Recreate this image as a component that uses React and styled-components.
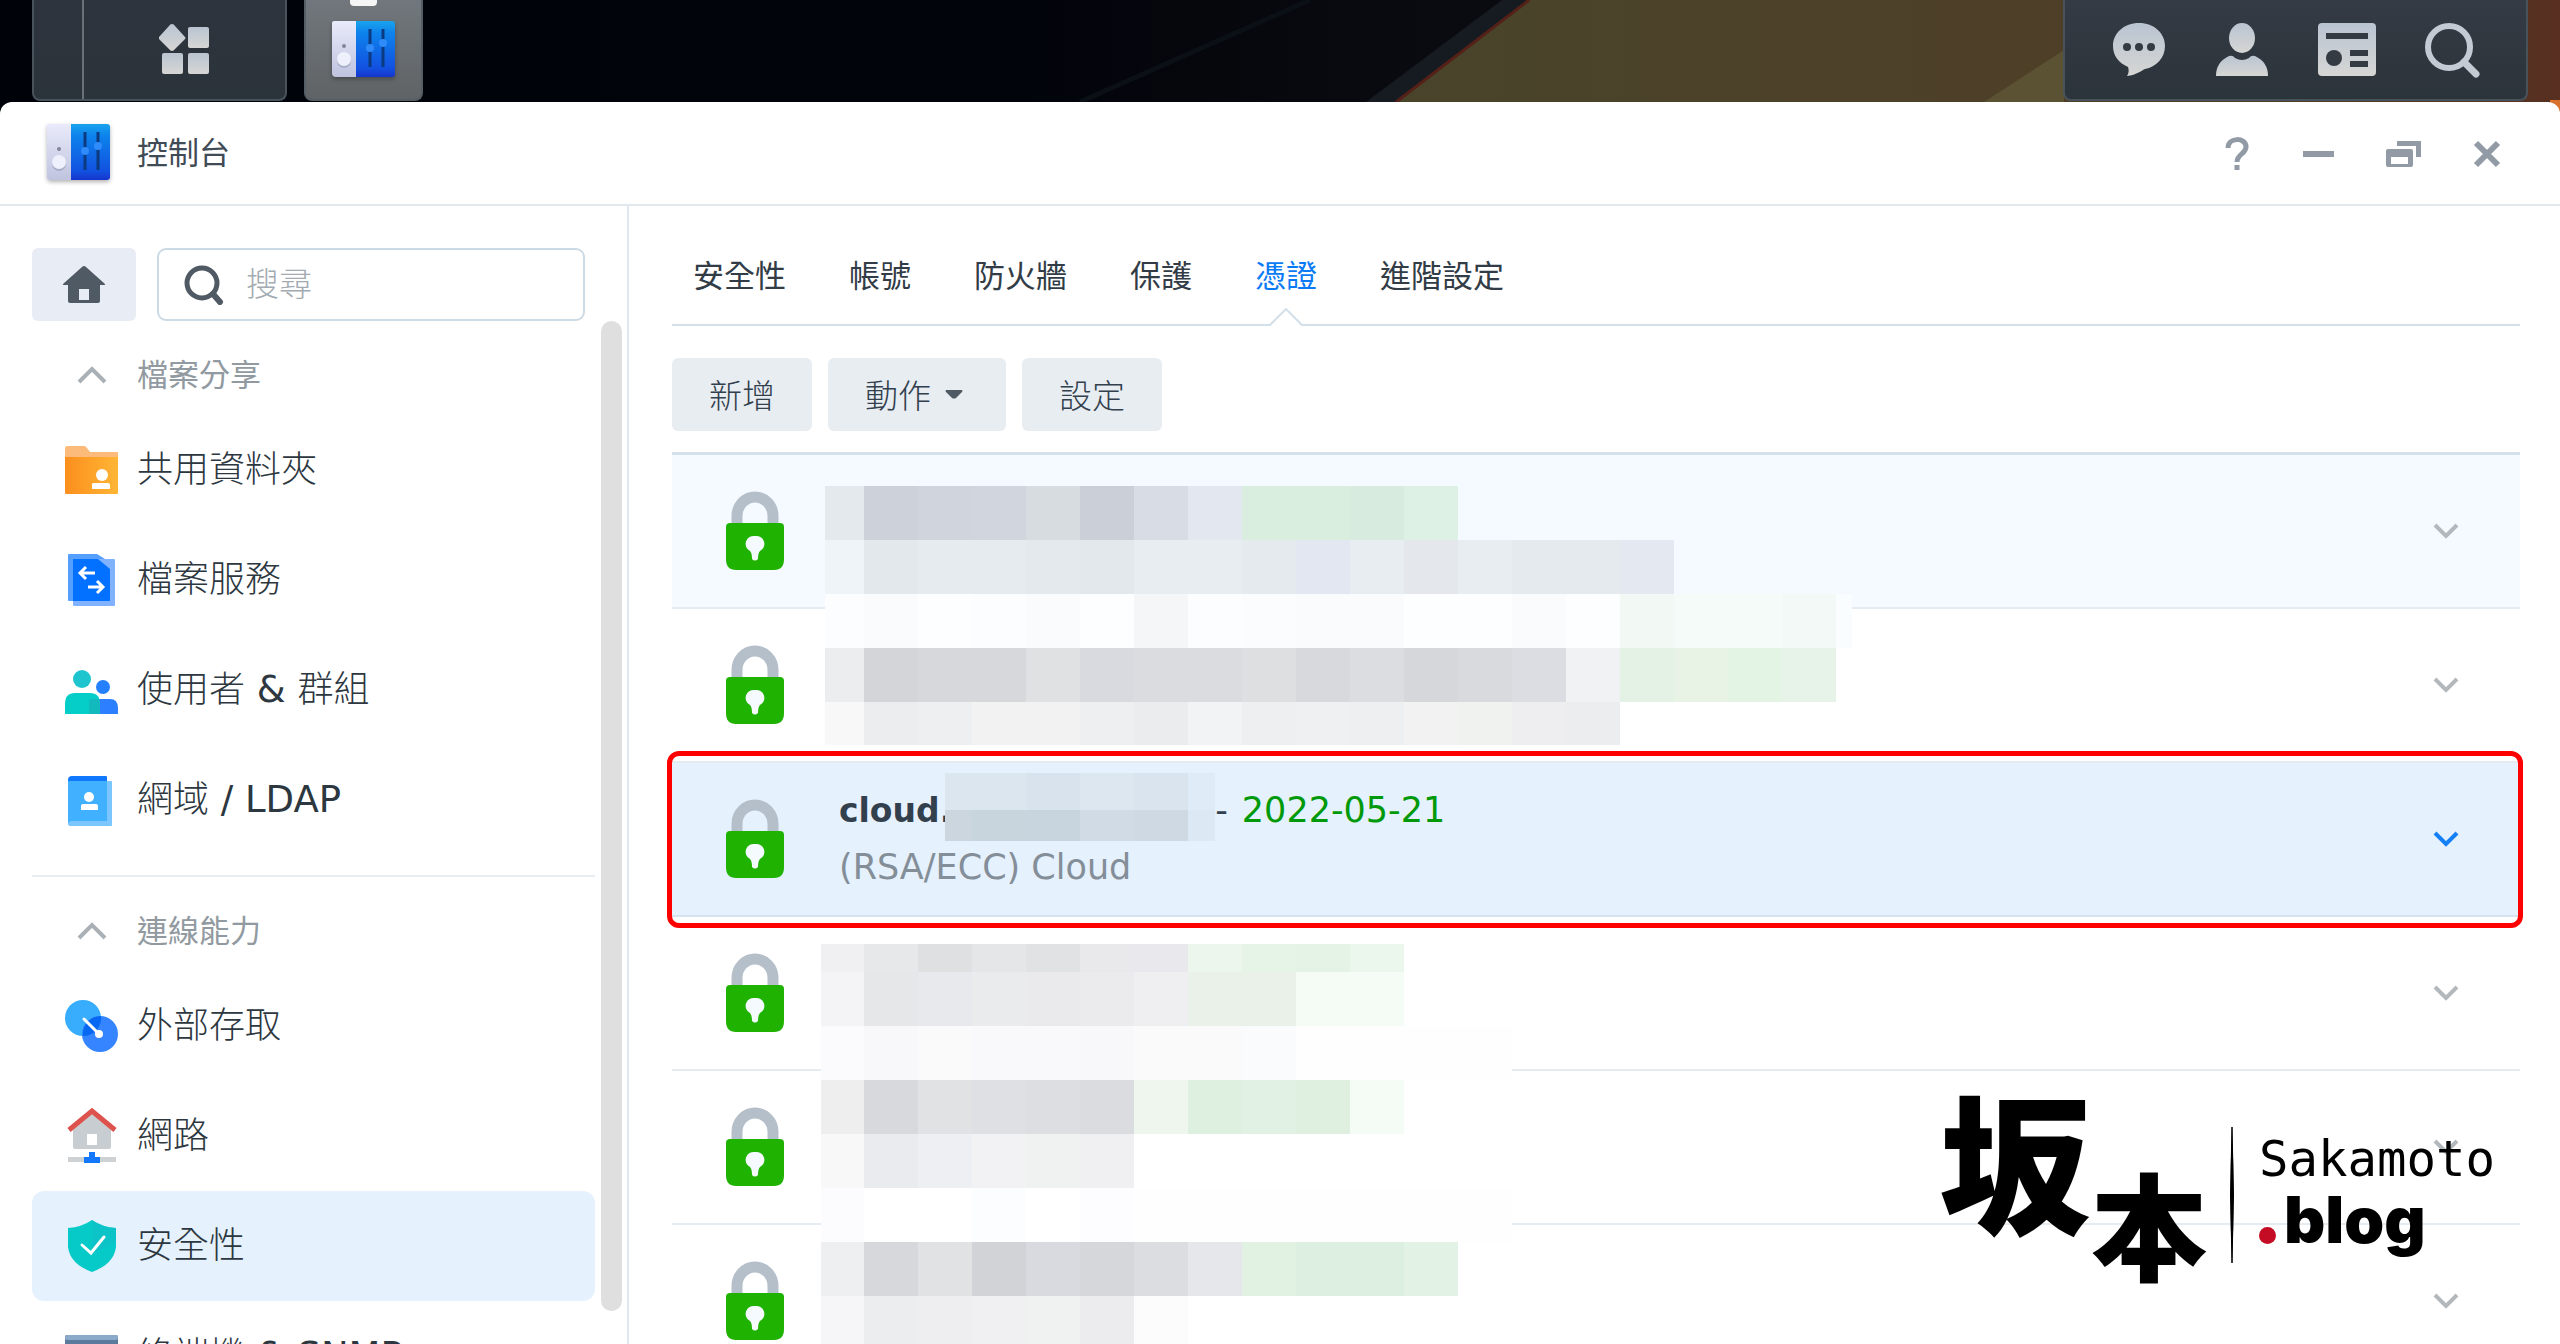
import React from "react";
import styled, { createGlobalStyle } from "styled-components";

const CERTIFICATES = [
  { id: 1, hovered: true },
  { id: 2 },
  {
    id: 3,
    selected: true,
    name: "cloud.",
    expires: "2022-05-21",
    description: "(RSA/ECC) Cloud"
  },
  { id: 4 },
  { id: 5 },
  { id: 6 }
];

const TABS = ["安全性", "帳號", "防火牆", "保護", "憑證", "進階設定"];

const SECTIONS = [
  {
    title: "檔案分享",
    items: [
      { label: "共用資料夾", icon: FolderIcon },
      { label: "檔案服務", icon: FileServiceIcon },
      { label: "使用者", latin: " & ", rest: "群組", icon: UsersIcon },
      { label: "網域", latin: " / LDAP", icon: DomainIcon }
    ]
  },
  {
    title: "連線能力",
    items: [
      { label: "外部存取", icon: ExternalIcon },
      { label: "網路", icon: NetworkIcon },
      { label: "安全性", icon: ShieldIcon, active: true },
      { label: "終端機", latin: " & SNMP", icon: TerminalIcon }
    ]
  }
];

// Each line: y, height, then the block colours from left to right.
const MOSAIC_TOP = [
  [0, 54, "#e4e9ed #cdd1d9 #d0d4dc #d1d5dd #d7dce0 #cbcfd8 #d8dce4 #e3e7ef #daeee0 #daeee0 #d7ecde #ddf1e5"],
  [54, 54, "#eff4f8 #e3e8ec #e6ebef #e6ebef #e4e9ed #e3e8ec #e8edf1 #e8edf1 #e5eaee #e3e7f1 #e8edf1 #e4e8ed #e8edf1 #e5eaee #e5eaee #e4e8f1"],
  [108, 54, "#fcfdff #fafbfc #fcfeff #fbfdfe #fafbfd #fcfeff #f5f6f8 #fcfdff #fbfcfe #f9fbfc #f9fbfd #fdfeff #fdfeff #fafbfd #fcfeff #f2f9f5 #f5fbf9 #f5fbf9 #f3f9f7 #fafdff"],
  [162, 54, "#ecedef #d4d5d9 #d7d8dc #d7d8dc #e0e1e3 #d9dadf #dbdce0 #dbdcdf #dedfe1 #d8d9dd #dcdde0 #d6d7db #d9dade #dcdde2 #f1f2f4 #e3f2e4 #e8f3e6 #e3f3e4 #e7f3e9"],
  [216, 43, "#f7f8f7 #ecedef #eeeff1 #f2f2f3 #f2f2f3 #eeeff1 #ebecee #f2f3f5 #eeeff1 #eff0f1 #eeeff1 #f3f2f3 #eff2ef #eeeef0 #ecedef"]
];

const MOSAIC_BOTTOM = [
  [0, 28, "#f0f0f3 #e7e8ea #dfe0e2 #e5e6e8 #e1e2e4 #e9e9ec #e9e9ed #ecf6ec #e6f3e7 #e4f3e5 #ebf6ec"],
  [28, 54, "#f4f4f7 #e6e7e9 #e8e9ec #eaebed #eaeaec #ebebed #efeff1 #eaf1e9 #e9f1e8 #f5fcf5 #f5fcf5"],
  [82, 54, "#fbfbfd #f8f8fa #f9faf9 #f9f9fb #f9f9fb #f8f8fa #f9faf9 #f9faf9 #fafbfd #fefefe #fefefe #fefefe #fefefe"],
  [136, 54, "#eeeeef #d8d9dc #e1e2e4 #dfe0e3 #dddee2 #dbdce0 #eff6ee #def0e0 #e1f1e4 #dff0e0 #f5fbf5"],
  [190, 54, "#f8f8f8 #eaebee #eeeff2 #f2f2f4 #f0f2f1 #f0f0f3"],
  [244, 54, "#fcfcfe #fefffe #fefffe #fcfdfe #ffffff #fdfdff #fefefe #fefefe #fefefe #fefefe #fefefe #fefefe #fefefe"],
  [298, 54, "#eeeff1 #d7d8db #e1e2e4 #d2d3d6 #d9dadf #d6d7da #dcdde0 #e6e7ea #e1f2e2 #dcefe0 #dcefe0 #e2f2e4"],
  [352, 54, "#f6f6f8 #ecedef #eeeef0 #f0f0f3 #f0f2f1 #ececef #fcfcfc"]
];

const MOSAIC_NAME = [
  [0, 37, "#dbe6ef #dbe6ef #d8e3ed #dce7f0 #dae4ee #dfebf7"],
  [37, 31, "#cbd6df #c9d5dd #c8d4de #d0dbe5 #ced9e4 #dce8f4"]
];

export default function App() {
  return (
    <Style.Desktop>
      <GlobalStyle />
      <Taskbar />
      <Style.Window>
        <TitleBar />
        <Style.Body>
          <Sidebar />
          <Style.Main>
            <Tabs current="憑證" />
            <Style.Toolbar>
              <Style.Button type="button">新增</Style.Button>
              <Style.Button type="button">
                動作
                <svg width="24" height="10" viewBox="0 0 24 10">
                  <path d="M1 1h16q1 1 0 2l-6 6q-2 1-4 0L1 3Q0 2 1 1z" fill="#505a64" />
                </svg>
              </Style.Button>
              <Style.Button type="button">設定</Style.Button>
            </Style.Toolbar>
            <CertificateList />
          </Style.Main>
        </Style.Body>
      </Style.Window>
      <Watermark />
    </Style.Desktop>
  );
}

function Taskbar() {
  return (
    <Style.Taskbar>
      <Wallpaper />
      <Style.Launcher>
        <Style.LauncherEdge />
        <Style.LauncherButton type="button" aria-label="主選單">
          <svg width="52" height="52" viewBox="0 0 52 52" fill="url(#tray)">
            <TrayGradient />
            <path d="M13 0q2 0 3 2l10 11q1 1 0 2L16 25q-3 4-6 0L0 15q-1-1 0-2L10 2q1-2 3-2z" />
            <rect x="29" y="3" width="21" height="21" rx="2" />
            <rect x="3" y="29" width="21" height="21" rx="2" />
            <rect x="29" y="29" width="21" height="21" rx="2" />
          </svg>
        </Style.LauncherButton>
      </Style.Launcher>
      <Style.AppButton type="button" aria-label="控制台">
        <ControlPanelIcon />
      </Style.AppButton>
      <Style.Tray>
        <Style.IconButton type="button" aria-label="訊息">
          <svg width="56" height="56" viewBox="0 0 56 56">
            <path
              d="M28 1c15 0 26 10 26 23 0 12-9 21-20 23-3 1-8 6-18 7 2-3 2-6 1-9C8 41 2 34 2 24 2 11 13 1 28 1z"
              fill="url(#tray)"
            />
            <g fill="#343b43">
              <circle cx="16" cy="25" r="4" />
              <circle cx="28" cy="25" r="4" />
              <circle cx="40" cy="25" r="4" />
            </g>
          </svg>
        </Style.IconButton>
        <Style.IconButton type="button" aria-label="使用者">
          <svg width="56" height="56" viewBox="0 0 56 56" fill="url(#tray)">
            <ellipse cx="28" cy="16" rx="13" ry="15" />
            <path d="M15 34q4-1 6 2 7 4 14 0 2-3 6-2 13 6 13 20H2q0-14 13-20z" />
          </svg>
        </Style.IconButton>
        <Style.IconButton type="button" aria-label="小工具">
          <svg width="60" height="56" viewBox="0 0 60 56">
            <rect x="1" y="1" width="58" height="53" rx="4" fill="url(#tray)" />
            <g fill="#343b43">
              <rect x="9" y="11" width="42" height="6" />
              <circle cx="17" cy="36" r="8" />
              <rect x="33" y="28" width="18" height="6" />
              <rect x="33" y="39" width="18" height="6" />
            </g>
          </svg>
        </Style.IconButton>
        <Style.IconButton type="button" aria-label="搜尋">
          <svg width="56" height="56" viewBox="0 0 56 56" fill="none" stroke="#c3cad3">
            <circle cx="25" cy="25" r="21" strokeWidth="6" />
            <path d="M40 40l12 12" strokeWidth="7" strokeLinecap="round" />
          </svg>
        </Style.IconButton>
      </Style.Tray>
    </Style.Taskbar>
  );
}

function TrayGradient() {
  return (
    <linearGradient id="tray" x1="0" y1="0" x2="0" y2="1">
      <stop offset="0" stopColor="#b9c4d1" />
      <stop offset="1" stopColor="#d6d6d4" />
    </linearGradient>
  );
}

function Wallpaper() {
  return (
    <Style.Wallpaper viewBox="0 0 2560 114" preserveAspectRatio="none">
      <defs>
        <linearGradient id="space">
          <stop offset="0" stopColor="#00020a" />
          <stop offset="0.4" stopColor="#02040b" />
          <stop offset="0.56" stopColor="#0a0b10" />
        </linearGradient>
        <linearGradient id="planet">
          <stop offset="0" stopColor="#48442a" />
          <stop offset="0.5" stopColor="#4e4028" />
          <stop offset="0.85" stopColor="#4f3a25" />
          <stop offset="1" stopColor="#582f20" />
        </linearGradient>
      </defs>
      <rect width="2560" height="114" fill="url(#space)" />
      <path d="M1502 0h27l-133 102-18 12h-28z" fill="#151b20" />
      <path d="M1310 0L1080 102" stroke="#0b0f16" strokeWidth="5" />
      <path d="M1529 0h1031v114H1380z" fill="url(#planet)" />
      <path d="M1529 0L1396 102" stroke="#542018" strokeWidth="3" />
      <path d="M2064 50v52h-80z" fill="#5b5133" />
      <path d="M2550 100h10v14h-10z" fill="#d9722c" />
    </Style.Wallpaper>
  );
}

function TitleBar() {
  return (
    <Style.TitleBar>
      <ControlPanelIcon />
      <Style.Title>控制台</Style.Title>
      <Style.WindowButtons>
        <Style.WindowButton type="button" aria-label="說明">
          <svg width="28" height="34" viewBox="0 0 28 34" fill="none" stroke="#929ba5">
            <path d="M4 11c0-11 18-11 18-1 0 7-9 7-9 15" strokeWidth="5" />
            <path d="M13 28v5" strokeWidth="5" />
          </svg>
        </Style.WindowButton>
        <Style.WindowButton type="button" aria-label="最小化">
          <svg width="32" height="28" viewBox="0 0 32 28">
            <rect x="0" y="11" width="31" height="6" fill="#929ba5" />
          </svg>
        </Style.WindowButton>
        <Style.WindowButton type="button" aria-label="還原">
          <svg width="36" height="28" viewBox="0 0 36 28" fill="#929ba5">
            <path d="M11 1h24v16h-5V6H11z" />
            <path
              d="M2 9h23q2 0 2 2v14q0 2-2 2H2q-2 0-2-2V11q0-2 2-2zm3 8v7h17v-7z"
              fillRule="evenodd"
            />
          </svg>
        </Style.WindowButton>
        <Style.WindowButton type="button" aria-label="關閉">
          <svg width="28" height="28" viewBox="0 0 28 28">
            <path d="M3 3l22 22M25 3L3 25" stroke="#929ba5" strokeWidth="6" />
          </svg>
        </Style.WindowButton>
      </Style.WindowButtons>
    </Style.TitleBar>
  );
}

function Sidebar() {
  return (
    <Style.Sidebar>
      <Style.SearchRow>
        <Style.HomeButton type="button" aria-label="首頁">
          <svg width="44" height="40" viewBox="0 0 44 40">
            <path
              d="M20 2q2-2 4 0l19 17q1 1-1 1h-4v16q0 2-2 2H8q-2 0-2-2V20H2q-2 0-1-1zm-3 22v11h10V24z"
              fill="#505a64"
              fillRule="evenodd"
            />
          </svg>
        </Style.HomeButton>
        <Style.SearchBox>
          <svg width="40" height="40" viewBox="0 0 40 40" fill="none" stroke="#505a64">
            <circle cx="18" cy="18" r="15" strokeWidth="5" />
            <path d="M29 29l7 8" strokeWidth="6" strokeLinecap="round" />
          </svg>
          <Style.SearchInput type="text" placeholder="搜尋" aria-label="搜尋" />
        </Style.SearchBox>
      </Style.SearchRow>
      <Style.Nav>
        {SECTIONS.map(section => (
          <Style.Section key={section.title}>
            <Style.SectionTitle type="button">
              <svg width="32" height="20" viewBox="0 0 32 20">
                <path d="M3 17L16 4l13 13" fill="none" stroke="#a9b0b6" strokeWidth="4" />
              </svg>
              <Style.SectionLabel>{section.title}</Style.SectionLabel>
            </Style.SectionTitle>
            {section.items.map(({ icon: Icon, ...item }) => (
              <Style.NavItem key={item.label} href="#" $active={item.active}>
                <Icon />
                <span>
                  {item.label}
                  {item.latin && <Style.Latin>{item.latin}</Style.Latin>}
                  {item.rest}
                </span>
              </Style.NavItem>
            ))}
          </Style.Section>
        ))}
      </Style.Nav>
      <Style.Scrollbar />
    </Style.Sidebar>
  );
}

function Tabs({ current }) {
  return (
    <Style.Tabs>
      {TABS.map(tab => (
        <Style.Tab key={tab} type="button" $current={tab === current}>
          {tab}
          {tab === current && (
            <Style.TabNotch width="36" height="18" viewBox="0 0 36 18">
              <path d="M2 18L18 2l16 16z" fill="#fff" />
              <path d="M1 17h1L18 1l16 16h1" fill="none" stroke="#d3dfe9" strokeWidth="2" />
            </Style.TabNotch>
          )}
        </Style.Tab>
      ))}
    </Style.Tabs>
  );
}

function CertificateList() {
  return (
    <Style.List>
      {CERTIFICATES.map(certificate => (
        <Certificate key={certificate.id} {...certificate} />
      ))}
      <Style.TopCover>
        <Mosaic first={39} width={1027} height={259} lines={MOSAIC_TOP} />
      </Style.TopCover>
      <Style.BottomCover>
        <Mosaic first={43} width={696} height={406} lines={MOSAIC_BOTTOM} />
      </Style.BottomCover>
    </Style.List>
  );
}

function Certificate({ name, expires, description, hovered, selected }) {
  return (
    <Style.Row $hovered={hovered} $selected={selected}>
      <LockIcon />
      <Style.Details>
        {name && (
          <Style.Name>
            <Style.Host>{name}</Style.Host>
            <Style.NameCover>
              <Mosaic first={27} width={270} height={68} lines={MOSAIC_NAME} />
            </Style.NameCover>
            <span>-</span>
            <Style.Expires>{expires}</Style.Expires>
          </Style.Name>
        )}
        {description && <Style.Description>{description}</Style.Description>}
      </Style.Details>
      <Style.IconButton type="button" aria-label="展開">
        <svg width="28" height="20" viewBox="0 0 28 20">
          <path
            d="M3 4l11 11L25 4"
            fill="none"
            stroke={selected ? "#1580f5" : "#b3b8bc"}
            strokeWidth="4"
          />
        </svg>
      </Style.IconButton>
      {selected && <Style.Highlight />}
    </Style.Row>
  );
}

function Mosaic({ first, width, height, lines }) {
  return (
    <svg width={width} height={height} viewBox={`0 0 ${width} ${height}`} shapeRendering="crispEdges">
      {lines.map(([y, h, colors]) =>
        colors.split(" ").map((color, i) => (
          <rect
            key={`${y}-${i}`}
            x={i === 0 ? 0 : first + (i - 1) * 54}
            y={y}
            width={i === 0 ? first : 54}
            height={h}
            fill={color}
          />
        ))
      )}
    </svg>
  );
}

function Watermark() {
  return (
    <Style.Watermark>
      <Style.BrushLarge>坂</Style.BrushLarge>
      <Style.BrushSmall>本</Style.BrushSmall>
      <svg width="6" height="136" viewBox="0 0 6 136">
        <path d="M3 0q3 68 0 136Q0 68 3 0z" stroke="#000" />
      </svg>
      <Style.Blog>
        <Style.BlogName>Sakamoto</Style.BlogName>
        <Style.BlogSuffix>
          <Style.Dot />
          blog
        </Style.BlogSuffix>
      </Style.Blog>
    </Style.Watermark>
  );
}

function ControlPanelIcon() {
  return (
    <Style.ControlIcon width="64" height="60" viewBox="0 0 64 60">
      <defs>
        <linearGradient id="cpBlue" x1="0" y1="0" x2="0" y2="1">
          <stop offset="0" stopColor="#1aa3ee" />
          <stop offset="0.2" stopColor="#0d84ec" />
          <stop offset="0.85" stopColor="#1250e0" />
          <stop offset="1" stopColor="#1734cc" />
        </linearGradient>
        <linearGradient id="cpWhite" x1="0" y1="0" x2="0" y2="1">
          <stop offset="0" stopColor="#e9ebfb" />
          <stop offset="1" stopColor="#bfc3de" />
        </linearGradient>
      </defs>
      <path d="M2 0h22v56H4q-4 0-4-4V2q0-2 2-2z" fill="url(#cpWhite)" />
      <path d="M24 0h36q3 0 3 3v50q0 3-3 3H24z" fill="url(#cpBlue)" />
      <path d="M38 8v38M51 8v38" stroke="#0b3a80" strokeWidth="3" />
      <circle cx="38" cy="27" r="4" fill="#2f8bfa" />
      <circle cx="51" cy="22" r="4" fill="#2f8bfa" />
      <circle cx="12" cy="25" r="2" fill="#80869c" />
      <circle cx="12" cy="40" r="7" fill="#a9aec8" />
      <circle cx="12" cy="38" r="7" fill="#eef0fb" />
    </Style.ControlIcon>
  );
}

function LockIcon() {
  return (
    <svg width="58" height="80" viewBox="0 0 58 80">
      <path d="M11 34V25a18 19 0 0 1 36 0v9" fill="none" stroke="#b4bfc9" strokeWidth="11" />
      <path d="M4 32h50q4 0 4 4v32q0 11-10 11H10Q0 79 0 68V36q0-4 4-4z" fill="#1fb200" />
      <path d="M29 45a8 8 0 0 1 5 15q-2 2-2 8-3 3-6 0 0-6-2-8a8 8 0 0 1 5-15z" fill="#f4fafe" />
    </svg>
  );
}

function FolderIcon() {
  return (
    <svg width="56" height="56" viewBox="0 0 56 56">
      <defs>
        <linearGradient id="folder" x1="0" y1="0" x2="1" y2="0">
          <stop offset="0" stopColor="#fb8f1d" />
          <stop offset="1" stopColor="#ffb536" />
        </linearGradient>
      </defs>
      <path d="M3 4h17q2 0 3 2l3 4h27q1 0 1 1v6H1V6q0-2 2-2z" fill="#fdbb7b" />
      <path d="M1 15h53v36q0 1-1 1H2q-1 0-1-1z" fill="url(#folder)" />
      <circle cx="38" cy="33" r="6" fill="#fff" />
      <path d="M29 41h15q2 0 2 2v4H28v-5z" fill="#fff" />
    </svg>
  );
}

function FileServiceIcon() {
  return (
    <svg width="56" height="56" viewBox="0 0 56 56">
      <path d="M5 2h28l8 5v42H5q-1 0-1-1V3q0-1 1-1z" fill="#559fff" />
      <path d="M9 7h41q1 0 1 1v45q0 1-1 1H10q-1 0-1-1z" fill="#80b2ff" />
      <path d="M9 7h25l12 10v32H9z" fill="#0371ff" />
      <g fill="none" stroke="#fff" strokeWidth="3">
        <path d="M31 21H16M22 15l-6 6 6 6" />
        <path d="M24 35h15M33 29l6 6-6 6" />
      </g>
    </svg>
  );
}

function UsersIcon() {
  return (
    <svg width="56" height="56" viewBox="0 0 56 56">
      <circle cx="18" cy="17" r="9" fill="#1fc5ce" />
      <circle cx="39" cy="25" r="7" fill="#2580ff" />
      <path d="M33 37h13q8 0 8 9v6H33z" fill="#2c7fff" />
      <path d="M11 31h15q10 0 10 11v10H1V42q0-11 10-11z" fill="#05cdc8" />
      <path d="M26 37h9q1 3 1 6v9H25V42q0-3 1-5z" fill="#12b9bd" />
    </svg>
  );
}

function DomainIcon() {
  return (
    <svg width="56" height="56" viewBox="0 0 56 56">
      <path d="M8 4h34q1 0 1 1v8H4V8q0-4 4-4z" fill="#0f78ff" />
      <path d="M4 9h43q1 0 1 1v43q0 1-1 1H6q-2 0-2-2z" fill="#7cc6ff" />
      <path d="M4 9h39v40H8q-3 0-4 2z" fill="#40b0ff" />
      <circle cx="25" cy="25" r="5" fill="#fff" />
      <path d="M19 32h13q2 0 2 2v4H17v-4q0-2 2-2z" fill="#fff" />
    </svg>
  );
}

function ExternalIcon() {
  return (
    <svg width="56" height="56" viewBox="0 0 56 56">
      <circle cx="19" cy="20" r="18" fill="#38acfd" />
      <circle cx="36" cy="36" r="18" fill="#3485ff" />
      <path d="M19 38a18 18 0 0 1 18-20 18 18 0 0 1-18 20z" fill="#0668f2" />
      <path d="M20 21l15 15" stroke="#fff" strokeWidth="3" strokeLinecap="round" />
      <circle cx="35" cy="36" r="4" fill="#fff" />
    </svg>
  );
}

function NetworkIcon() {
  return (
    <svg width="56" height="56" viewBox="0 0 56 56">
      <path d="M9 22L28 6l19 16v17q0 2-2 2H11q-2 0-2-2zm14 4v11h10V26z" fill="#c8cdd1" fillRule="evenodd" />
      <path d="M5 22L28 3l23 19" fill="none" stroke="#dd524c" strokeWidth="5" />
      <path d="M4 49h48v5H4z" fill="#ced2d5" />
      <path d="M25 44h6v5h5v6H20v-6h5z" fill="#1478ff" />
    </svg>
  );
}

function ShieldIcon() {
  return (
    <svg width="56" height="56" viewBox="0 0 56 56">
      <path d="M28 2q10 7 24 8v19q-2 17-24 25Q6 46 4 29V10q14-1 24-8z" fill="#06cac8" />
      <path d="M28 2q10 7 24 8v14L28 36z" fill="#10bfc6" opacity="0.6" />
      <path d="M18 27l9 8 13-16" fill="none" stroke="#fff" strokeWidth="3" strokeLinecap="round" />
    </svg>
  );
}

function TerminalIcon() {
  return (
    <svg width="56" height="56" viewBox="0 0 56 56">
      <rect x="1" y="7" width="53" height="42" rx="2" fill="#5c7a9b" />
      <rect x="1" y="7" width="53" height="5" rx="2" fill="#8ba9c9" />
      <path d="M10 22l8 7-8 7M22 38h14" fill="none" stroke="#fff" strokeWidth="4" />
    </svg>
  );
}

const GlobalStyle = createGlobalStyle`
  * {
    box-sizing: border-box;
  }

  body {
    margin: 0;
    overflow: hidden;
    background: #fff;
    color: #32404d;
    font-family: "DejaVu Sans", "Noto Sans CJK TC", sans-serif;
  }

  button,
  input {
    border: 0;
    padding: 0;
    background: none;
    color: inherit;
    font: inherit;
  }

  svg {
    display: block;
    flex: none;
  }
`;

const Panel = styled.div`
  display: flex;
  border: 2px solid #48525b;
  border-top: 0;
  border-radius: 0 0 8px 8px;
  background: linear-gradient(#343b44, #2b333b);
`;

const Style = {
  Desktop: styled.div`
    position: relative;
    display: flex;
    flex-direction: column;
    height: 100vh;
    overflow: hidden;
  `,
  Taskbar: styled.header`
    position: relative;
    display: flex;
    height: 102px;
    padding: 0 32px;
    background: #02040b;
  `,
  Wallpaper: styled.svg`
    position: absolute;
    top: 0;
    left: 0;
    width: 100%;
    height: 114px;
  `,
  Launcher: styled(Panel)`
    position: relative;
    width: 255px;
    height: 101px;
    background: linear-gradient(#2d343d, #2b333b);
  `,
  LauncherEdge: styled.div`
    width: 50px;
    border-right: 2px solid #6b7177;
  `,
  LauncherButton: styled.button`
    display: flex;
    flex: 1;
    align-items: center;
    justify-content: center;
  `,
  AppButton: styled.button`
    position: relative;
    display: flex;
    justify-content: center;
    width: 119px;
    height: 101px;
    margin-left: 17px;
    padding-top: 21px;
    border: 2px solid #555d65;
    border-top: 0;
    border-radius: 0 0 8px 8px;
    background: linear-gradient(#71777c, #5f6366);

    &::before {
      content: "";
      position: absolute;
      top: 0;
      width: 27px;
      height: 6px;
      border-radius: 0 0 4px 4px;
      background: #f5f5f5;
    }
  `,
  Tray: styled(Panel)`
    position: relative;
    align-items: center;
    gap: 47px;
    height: 101px;
    margin-left: auto;
    padding: 0 46px;
  `,
  IconButton: styled.button`
    display: flex;
    align-items: center;
  `,
  Window: styled.div`
    position: relative;
    display: flex;
    flex: 1;
    flex-direction: column;
    min-height: 0;
    border-radius: 12px 12px 0 0;
    background: #fff;
  `,
  TitleBar: styled.div`
    display: flex;
    flex: none;
    align-items: center;
    height: 104px;
    padding: 2px 59px 0 47px;
    border-bottom: 2px solid #e1e8ee;
  `,
  ControlIcon: styled.svg`
    filter: drop-shadow(0 2px 2px rgba(0, 0, 0, 0.3));
  `,
  Title: styled.h1`
    margin: 0 0 8px 26px;
    color: #414b55;
    font-size: 31px;
    font-weight: 400;
  `,
  WindowButtons: styled.div`
    display: flex;
    align-items: center;
    gap: 51px;
    margin-left: auto;
  `,
  WindowButton: styled.button`
    display: flex;
  `,
  Body: styled.div`
    display: flex;
    flex: 1;
    min-height: 0;
  `,
  Sidebar: styled.aside`
    position: relative;
    flex: none;
    width: 629px;
    padding: 42px 32px 0;
    border-right: 2px solid #dfe7f1;
    overflow: hidden;
  `,
  SearchRow: styled.div`
    display: flex;
    gap: 21px;
    margin-right: 10px;
  `,
  HomeButton: styled.button`
    display: flex;
    align-items: center;
    justify-content: center;
    width: 104px;
    height: 73px;
    border-radius: 6px;
    background: #e8edf5;
  `,
  SearchBox: styled.label`
    display: flex;
    flex: 1;
    align-items: center;
    gap: 22px;
    height: 73px;
    padding-left: 25px;
    border: 2px solid #ccdae5;
    border-radius: 9px;
  `,
  SearchInput: styled.input`
    width: 100%;
    font-size: 33px;
    font-weight: 300;
    outline: 0;

    &::placeholder {
      color: #a3abb2;
    }
  `,
  Nav: styled.nav`
    margin-top: 14px;
  `,
  Section: styled.section`
    & + & {
      margin-top: 20px;
      padding-top: 14px;
      border-top: 2px solid #e6edf2;
    }
  `,
  SectionTitle: styled.button`
    display: flex;
    align-items: center;
    gap: 29px;
    height: 80px;
    padding-left: 44px;
    color: #929aa1;
    font-size: 31px;
  `,
  SectionLabel: styled.span`
    padding-bottom: 6px;
  `,
  NavItem: styled.a`
    display: flex;
    align-items: center;
    gap: 17px;
    height: 110px;
    padding-left: 32px;
    border-radius: 12px;
    background: ${props => (props.$active ? "#e5f1fd" : "none")};
    color: #2d3740;
    font-size: 36px;
    font-weight: 300;
    line-height: 42px;
    text-decoration: none;
    white-space: pre;
  `,
  Latin: styled.span`
    font-size: 37px;
    font-weight: 400;
  `,
  Scrollbar: styled.div`
    position: absolute;
    top: 115px;
    right: 5px;
    width: 21px;
    height: 990px;
    border-radius: 11px;
    background: #dfdfdf;
  `,
  Main: styled.main`
    flex: 1;
    min-width: 0;
    padding: 26px 40px 0 43px;
  `,
  Tabs: styled.div`
    display: flex;
    gap: 63px;
    height: 94px;
    padding: 0 21px;
    border-bottom: 2px solid #d3dfe9;
  `,
  Tab: styled.button`
    position: relative;
    height: 92px;
    padding-bottom: 10px;
    color: ${props => (props.$current ? "#0b7af5" : "#323c46")};
    font-size: 31px;
    white-space: nowrap;
  `,
  TabNotch: styled.svg`
    position: absolute;
    top: 76px;
    left: 50%;
    margin-left: -18px;
  `,
  Toolbar: styled.div`
    display: flex;
    gap: 16px;
    padding: 32px 0 21px;
  `,
  Button: styled.button`
    display: flex;
    align-items: center;
    gap: 14px;
    height: 73px;
    padding: 0 37px 2px;
    border-radius: 6px;
    background: #e8edf2;
    font-size: 33px;
    font-weight: 300;
  `,
  List: styled.ul`
    position: relative;
    margin: 0;
    padding: 0;
    border-top: 3px solid #d5e0e8;
    list-style: none;
  `,
  Row: styled.li`
    position: relative;
    display: flex;
    align-items: center;
    height: 154px;
    padding: 0 60px 0 54px;
    border-bottom: 2px solid ${props => (props.$selected ? "#d5e3ee" : "#e5ecf1")};
    background: ${props =>
      props.$selected ? "#e5f1fd" : props.$hovered ? "#f4faff" : "#fff"};
  `,
  Details: styled.div`
    flex: 1;
    margin-left: 55px;
    font-size: 35px;
    line-height: 57px;
  `,
  Name: styled.div`
    display: flex;
    align-items: center;
    height: 57px;
  `,
  Host: styled.strong`
    font-size: 33px;
  `,
  NameCover: styled.span`
    width: 270px;
    margin: 0 0 8px -7px;
  `,
  Expires: styled.span`
    margin-left: 14px;
    color: #00990a;
  `,
  Description: styled.div`
    color: #848e98;
  `,
  TopCover: styled.div`
    position: absolute;
    top: 31px;
    left: 153px;
  `,
  BottomCover: styled.div`
    position: absolute;
    top: 489px;
    left: 149px;
  `,
  Highlight: styled.div`
    position: absolute;
    z-index: 1;
    top: -12px;
    right: -3px;
    bottom: -13px;
    left: -5px;
    border: 5px solid #f00;
    border-radius: 12px;
  `,
  Watermark: styled.div`
    position: absolute;
    right: 65px;
    bottom: 36px;
    display: flex;
    align-items: center;
    color: #000;
    font-family: "Noto Sans CJK JP", sans-serif;
    pointer-events: none;
  `,
  BrushLarge: styled.span`
    margin-bottom: 74px;
    font-size: 152px;
    font-weight: 900;
    line-height: 152px;
  `,
  BrushSmall: styled.span`
    margin: 52px 22px 0 0;
    font-size: 116px;
    font-weight: 900;
    line-height: 116px;
  `,
  Blog: styled.div`
    margin: 0 0 6px 24px;
  `,
  BlogName: styled.div`
    font-family: "DejaVu Sans Mono", monospace;
    font-size: 49px;
    line-height: 56px;
  `,
  BlogSuffix: styled.div`
    display: flex;
    align-items: flex-end;
    gap: 8px;
    font-family: Inter, sans-serif;
    font-size: 64px;
    font-weight: 900;
    line-height: 64px;
  `,
  Dot: styled.span`
    width: 17px;
    height: 17px;
    margin-bottom: 8px;
    border-radius: 50%;
    background: #c40d24;
  `
};
